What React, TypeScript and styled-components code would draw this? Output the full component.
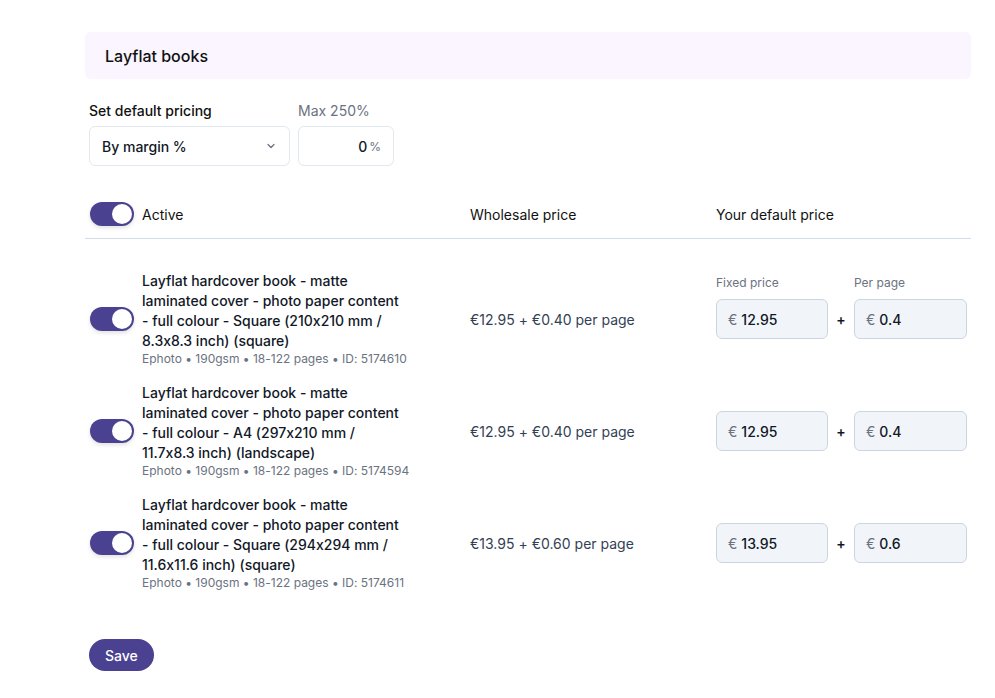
import styled, { createGlobalStyle } from 'styled-components';

const purple = '#4a4190';

const GlobalStyle = createGlobalStyle`
  body {
    margin: 0;
    background: #ffffff;
    font-family: Inter, "Noto Sans", sans-serif;
    font-feature-settings: "calt" 0;
    color: #111827;
  }
`;

const Page = styled.div`
  width: 886px;
  padding: 32px 0 0 85px;
`;

const SectionHeader = styled.div`
  height: 47px;
  display: flex;
  align-items: center;
  padding: 0 20px;
  background: #faf5ff;
  border-radius: 6px;
  font-size: 16px;
  font-weight: 500;
  color: #111111;
`;

const Controls = styled.div`
  display: flex;
  gap: 8px;
  margin-top: 22px;
  padding-left: 4px;
`;

const Field = styled.div`
  display: flex;
  flex-direction: column;
  gap: 5px;
`;

const FieldLabel = styled.span<{ $muted?: boolean }>`
  font-size: 14px;
  line-height: 20px;
  font-weight: ${({ $muted }) => ($muted ? 400 : 500)};
  color: ${({ $muted }) => ($muted ? '#6b7280' : '#111111')};
`;

const Box = styled.div<{ $width: number }>`
  box-sizing: border-box;
  width: ${({ $width }) => $width}px;
  height: 40px;
  border: 1px solid #e2e8f0;
  border-radius: 6px;
  display: flex;
  align-items: center;
  padding: 0 12px;
  font-size: 14px;
`;

const SelectText = styled.span`
  flex: 1;
  font-weight: 500;
`;

const PercentValue = styled.span`
  flex: 1;
  text-align: right;
  font-weight: 500;
  padding-right: 2px;
`;

const PercentSign = styled.span`
  font-size: 12px;
  color: #6b7280;
`;

const Table = styled.div`
  margin-top: 24px;
`;

const Row = styled.div<{ $head?: boolean }>`
  display: grid;
  grid-template-columns: 52px 328px 246px 1fr;
  align-items: center;
  padding-left: 5px;
  ${({ $head }) =>
    $head
      ? `height: 48px; border-bottom: 1px solid #d2dce8; font-size: 14px; color: #111111;`
      : `padding-top: 8px; padding-bottom: 8px;`}
`;

const RowsWrap = styled.div`
  padding-top: 24px;
`;

const HeadActive = styled.div`
  display: flex;
  align-items: center;
  gap: 8px;
  grid-column: 1 / 3;
`;

const Toggle = styled.span`
  position: relative;
  display: inline-block;
  width: 44px;
  height: 24px;
  border-radius: 12px;
  background: ${purple};
  box-shadow: 0 2px 4px rgba(0, 0, 0, 0.12);
  flex-shrink: 0;

  &::after {
    content: '';
    position: absolute;
    top: 2px;
    right: 2px;
    width: 20px;
    height: 20px;
    border-radius: 50%;
    background: #ffffff;
  }
`;

const ProductTitle = styled.div`
  max-width: 263px;
  font-size: 14px;
  line-height: 20px;
  font-weight: 500;
  color: #111827;
`;

const ProductMeta = styled.div`
  font-size: 12px;
  line-height: 16px;
  color: #6b7280;
  white-space: nowrap;
`;

const Wholesale = styled.div`
  font-size: 14px;
  color: #334155;
`;

const PriceCell = styled.div`
  display: grid;
  grid-template-columns: 112px 26px 113px;
  grid-template-rows: 16px 40px;
  row-gap: 8px;
  padding-bottom: 24px;
`;

const PriceLabel = styled.span<{ $hidden?: boolean }>`
  font-size: 12px;
  line-height: 16px;
  color: #6b7280;
  visibility: ${({ $hidden }) => ($hidden ? 'hidden' : 'visible')};
`;

const PriceInput = styled.div`
  box-sizing: border-box;
  height: 40px;
  display: flex;
  align-items: center;
  gap: 4px;
  padding: 0 11px;
  background: #f1f5f9;
  border: 1px solid #cbd5e1;
  border-radius: 6px;
  font-size: 14px;
`;

const Euro = styled.span`
  color: #6b7280;
`;

const Amount = styled.span`
  font-weight: 500;
  color: #111827;
`;

const Plus = styled.span`
  display: flex;
  align-items: center;
  justify-content: center;
  font-size: 14px;
  font-weight: 600;
`;

const SaveButton = styled.button`
  margin: 40px 0 0 4px;
  height: 32px;
  padding: 0 16px;
  border: none;
  border-radius: 16px;
  background: ${purple};
  color: #ffffff;
  font-family: Inter, sans-serif;
  font-size: 14px;
  font-weight: 500;
`;

const products = [
  {
    title: 'Layflat hardcover book - matte laminated cover - photo paper content - full colour - Square (210x210 mm / 8.3x8.3 inch) (square)',
    id: '5174610',
    wholesale: '€12.95 + €0.40 per page',
    fixed: '12.95',
    perPage: '0.4',
  },
  {
    title: 'Layflat hardcover book - matte laminated cover - photo paper content - full colour - A4 (297x210 mm / 11.7x8.3 inch) (landscape)',
    id: '5174594',
    wholesale: '€12.95 + €0.40 per page',
    fixed: '12.95',
    perPage: '0.4',
  },
  {
    title: 'Layflat hardcover book - matte laminated cover - photo paper content - full colour - Square (294x294 mm / 11.6x11.6 inch) (square)',
    id: '5174611',
    wholesale: '€13.95 + €0.60 per page',
    fixed: '13.95',
    perPage: '0.6',
  },
];

function Chevron() {
  return (
    <svg width="12" height="12" viewBox="0 0 24 24" fill="none" stroke="#6b7280" strokeWidth="2.5" strokeLinecap="round" strokeLinejoin="round">
      <path d="M6 9l6 6 6-6" />
    </svg>
  );
}

export default function App() {
  return (
    <Page>
      <GlobalStyle />
      <SectionHeader>Layflat books</SectionHeader>

      <Controls>
        <Field>
          <FieldLabel>Set default pricing</FieldLabel>
          <Box $width={201}>
            <SelectText>By margin %</SelectText>
            <Chevron />
          </Box>
        </Field>
        <Field>
          <FieldLabel $muted>Max 250%</FieldLabel>
          <Box $width={96}>
            <PercentValue>0</PercentValue>
            <PercentSign>%</PercentSign>
          </Box>
        </Field>
      </Controls>

      <Table>
        <Row $head>
          <HeadActive>
            <Toggle />
            <span>Active</span>
          </HeadActive>
          <span>Wholesale price</span>
          <span>Your default price</span>
        </Row>

        <RowsWrap>
          {products.map((p, i) => (
            <Row key={p.id}>
              <Toggle />
              <div>
                <ProductTitle>{p.title}</ProductTitle>
                <ProductMeta>Ephoto • 190gsm • 18-122 pages • ID: {p.id}</ProductMeta>
              </div>
              <Wholesale>{p.wholesale}</Wholesale>
              <PriceCell>
                <PriceLabel $hidden={i > 0}>Fixed price</PriceLabel>
                <span />
                <PriceLabel $hidden={i > 0}>Per page</PriceLabel>
                <PriceInput>
                  <Euro>€</Euro>
                  <Amount>{p.fixed}</Amount>
                </PriceInput>
                <Plus>+</Plus>
                <PriceInput>
                  <Euro>€</Euro>
                  <Amount>{p.perPage}</Amount>
                </PriceInput>
              </PriceCell>
            </Row>
          ))}
        </RowsWrap>
      </Table>

      <SaveButton>Save</SaveButton>
    </Page>
  );
}
